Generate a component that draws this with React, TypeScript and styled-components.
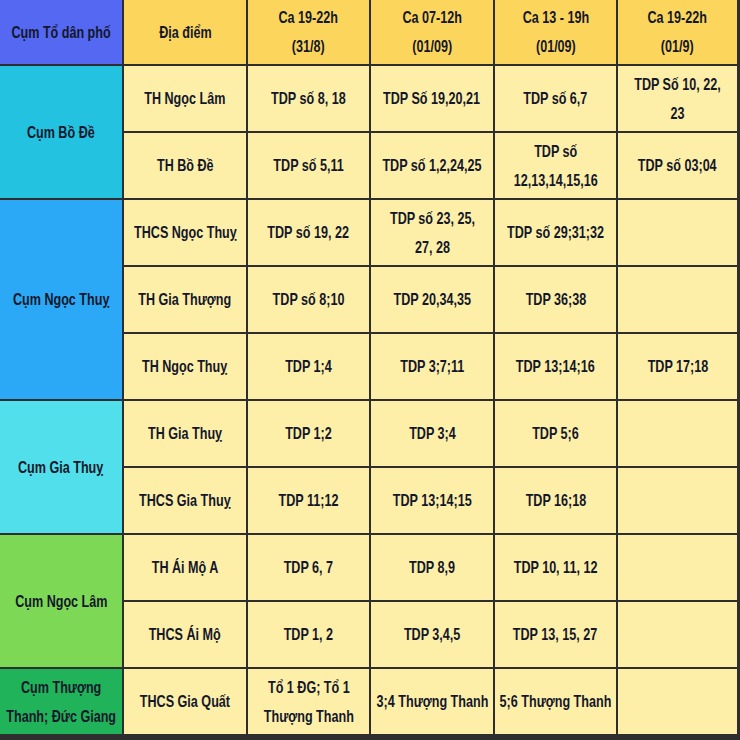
import * as React from 'react';
import styled, { createGlobalStyle } from 'styled-components';

const GlobalStyle = createGlobalStyle`
  html, body {
    margin: 0;
    padding: 0;
    background: #6b6b6b;
  }
`

const colours = {
  line: '#2e2e2e',
  headCorner: '#5568f1',
  head: '#fcd65c',
  cell: '#fdefa8',
  text: '#14172a',
}

const Table = styled.div`
  width: 740px;
  height: 740px;
  box-sizing: border-box;
  display: grid;
  grid-template-columns: 122px 122px 121px 122px 121px 119px;
  grid-template-rows: 64px repeat(10, 65px);
  gap: 2px;
  background: ${colours.line};
  border-right: 3px solid ${colours.line};
  border-bottom: 3px solid ${colours.line};
  font-family: "Liberation Sans", Arial, sans-serif;
  font-weight: 700;
  font-size: 17px;
  color: ${colours.text};
`

const Cell = styled.div<{ $bg?: string; $span?: number }>`
  background: ${props => props.$bg || colours.cell};
  grid-row: ${props => (props.$span ? `span ${props.$span}` : 'auto')};
  display: flex;
  align-items: center;
  justify-content: center;
  text-align: center;
  line-height: 29px;
  min-width: 0;
`

const HeadCell = styled(Cell)`
  background: ${props => props.$bg || colours.head};
`

// the source uses a narrow bold face; squeeze a regular bold one to match
const Label = styled.span`
  display: inline-block;
  white-space: pre;
  transform: scaleX(0.74);
  flex-shrink: 0;
`

type Group = {
  name: string;
  colour: string;
  rows: string[][];
}

const groups: Group[] = [
  {
    name: 'Cụm Bồ Đề',
    colour: '#22c2e0',
    rows: [
      ['TH Ngọc Lâm', 'TDP số 8, 18', 'TDP Số 19,20,21', 'TDP số 6,7', 'TDP Số 10, 22,\n23'],
      ['TH Bồ Đề', 'TDP số 5,11', 'TDP số 1,2,24,25', 'TDP số\n12,13,14,15,16', 'TDP số 03;04'],
    ],
  },
  {
    name: 'Cụm Ngọc Thuỵ',
    colour: '#2ba9f6',
    rows: [
      ['THCS Ngọc Thuỵ', 'TDP số 19, 22', 'TDP số 23, 25,\n27, 28', 'TDP số 29;31;32', ''],
      ['TH Gia Thượng', 'TDP số 8;10', 'TDP 20,34,35', 'TDP 36;38', ''],
      ['TH Ngọc Thuỵ', 'TDP 1;4', 'TDP 3;7;11', 'TDP 13;14;16', 'TDP 17;18'],
    ],
  },
  {
    name: 'Cụm Gia Thuỵ',
    colour: '#50dfeb',
    rows: [
      ['TH Gia Thuỵ', 'TDP 1;2', 'TDP 3;4', 'TDP 5;6', ''],
      ['THCS Gia Thuỵ', 'TDP 11;12', 'TDP 13;14;15', 'TDP 16;18', ''],
    ],
  },
  {
    name: 'Cụm Ngọc Lâm',
    colour: '#7dd856',
    rows: [
      ['TH Ái Mộ A', 'TDP 6, 7', 'TDP 8,9', 'TDP 10, 11, 12', ''],
      ['THCS Ái Mộ', 'TDP 1, 2', 'TDP 3,4,5', 'TDP 13, 15, 27', ''],
    ],
  },
  {
    name: 'Cụm Thượng\nThanh; Đức Giang',
    colour: '#20b35a',
    rows: [
      ['THCS Gia Quất', 'Tổ 1 ĐG; Tổ 1\nThượng Thanh', '3;4 Thượng Thanh', '5;6 Thượng Thanh', ''],
    ],
  },
]

const headers = ['Địa điểm', 'Ca 19-22h\n(31/8)', 'Ca 07-12h\n(01/09)', 'Ca 13 - 19h\n(01/09)', 'Ca 19-22h\n(01/9)']

export default function App() {
  return (
    <>
      <GlobalStyle />
      <Table>
        <HeadCell $bg={colours.headCorner}>
          <Label>Cụm Tổ dân phố</Label>
        </HeadCell>
        {headers.map((h, i) => (
          <HeadCell key={i}>
            <Label>{h}</Label>
          </HeadCell>
        ))}
        {groups.map(g =>
          g.rows.map((row, ri) => (
            <React.Fragment key={`${g.colour}-${ri}`}>
              {ri === 0 && (
                <Cell $bg={g.colour} $span={g.rows.length}>
                  <Label>{g.name}</Label>
                </Cell>
              )}
              {row.map((c, ci) => (
                <Cell key={ci}>
                  <Label>{c}</Label>
                </Cell>
              ))}
            </React.Fragment>
          ))
        )}
      </Table>
    </>
  )
}
